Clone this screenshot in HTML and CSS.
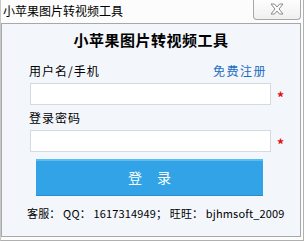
FILE: index.html
```html
<!DOCTYPE html>
<html>
<head>
<meta charset="utf-8">
<link rel="stylesheet" href="styles.css">
</head>
<body>
<div class="window">
  <div class="titlebar">
    <span class="title">小苹果图片转视频工具</span>
    <div class="close">
      <svg width="16" height="12" viewBox="0 0 16 12"><path d="M2 1 H5.5 L8 4 L10.5 1 H14 L10 6 L14 11 H10.5 L8 8 L5.5 11 H2 L6 6 Z" fill="#fff" stroke="#8a8a8a" stroke-width="1" stroke-linejoin="round"/></svg>
    </div>
  </div>
  <div class="panel">
    <h1 class="heading">小苹果图片转视频工具</h1>
    <div class="row label-row">
      <span class="label">用户名/手机</span>
      <a class="register">免费注册</a>
    </div>
    <div class="row field-row">
      <div class="input"></div>
      <span class="star">*</span>
    </div>
    <div class="row label-row2">
      <span class="label">登录密码</span>
    </div>
    <div class="row field-row">
      <div class="input"></div>
      <span class="star">*</span>
    </div>
    <div class="btn">登 录</div>
    <div class="footer">客服： QQ： 1617314949； 旺旺： bjhmsoft_2009</div>
  </div>
</div>
</body>
</html>
```
FILE: styles.css
```css
* { box-sizing: border-box; }
html, body { margin: 0; padding: 0; }
body {
  width: 304px;
  height: 241px;
  background: #fcfcfc;
  font-family: "Noto Sans CJK SC", "Noto Sans", sans-serif;
  overflow: hidden;
}
.window {
  width: 304px;
  height: 241px;
  border-left: 1px solid #c8c8c8;
  border-right: 1px solid #b0b0b0;
  border-bottom: 1px solid #b0b0b0;
  padding: 0 2px 3px 0;
  display: flex;
  flex-direction: column;
  background: #fcfcfc;
}
.titlebar {
  height: 23px;
  display: flex;
  align-items: flex-start;
  justify-content: space-between;
  flex-shrink: 0;
}
.title {
  font-size: 12px;
  line-height: 14px;
  margin: 4px 0 0 2px;
  color: #000;
}
.close {
  width: 48px;
  height: 20px;
  border: 1px solid #a8a8a8;
  border-top: none;
  border-radius: 0 0 4px 4px;
  background: linear-gradient(#fdfdfd, #f0f0f0);
  display: flex;
  align-items: center;
  justify-content: center;
}
.close svg { display: block; margin-top: -1px; }
.panel {
  flex: 1;
  border: 1px solid #a8a8a8;
  background: #f3f6fb;
  display: flex;
  flex-direction: column;
}
.heading {
  margin: 6px 0 0 0;
  font-size: 15px;
  line-height: 20px;
  font-weight: bold;
  text-align: center;
  letter-spacing: 0.5px;
  color: #000;
}
.row {
  display: flex;
  align-items: center;
}
.label-row {
  margin: 13px 0 0 27px;
  width: 238px;
  justify-content: space-between;
  height: 16px;
}
.label-row2 {
  margin: 5px 0 0 27px;
  height: 16px;
}
.label {
  font-size: 12px;
  line-height: 16px;
  color: #000;
  letter-spacing: 1px;
}
.register {
  font-size: 12px;
  line-height: 16px;
  color: #1c6cc0;
  letter-spacing: 1.5px;
}
.field-row {
  margin: 4px 0 0 28px;
}
.label-row2 + .field-row { margin-top: 4px; }
.input {
  width: 241px;
  height: 22px;
  background: #fff;
  border: 1px solid #d6d9de;
}
.star {
  color: #e01010;
  font-size: 14px;
  font-weight: bold;
  margin-left: 6px;
  line-height: 14px;
  margin-top: 5px;
}
.btn {
  margin: 7px 0 0 34px;
  width: 227px;
  height: 37px;
  background: #31a3e6;
  border-top: 2px solid #5bbcf0;
  border-bottom: 1px solid #2a8cc8;
  color: #fff;
  font-size: 14px;
  line-height: 33px;
  text-align: center;
  letter-spacing: 6px;
  text-indent: 6px;
}
.footer {
  margin: 9px 0 0 25px;
  font-size: 11px;
  line-height: 16px;
  color: #000;
  white-space: nowrap;
  letter-spacing: 0.15px;
}
```
